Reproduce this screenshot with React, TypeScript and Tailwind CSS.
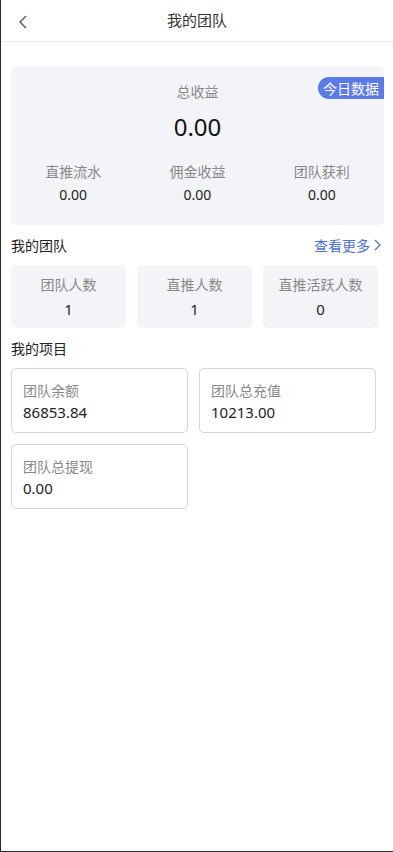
import React from 'react';

const font = { fontFamily: '"Noto Sans", "Noto Sans CJK SC", sans-serif' };

const teamStats = [
  { label: '团队人数', value: '1' },
  { label: '直推人数', value: '1' },
  { label: '直推活跃人数', value: '0' },
];

const projects = [
  { label: '团队余额', value: '86853.84' },
  { label: '团队总充值', value: '10213.00' },
  { label: '团队总提现', value: '0.00' },
];

const earnings = [
  { label: '直推流水', value: '0.00' },
  { label: '佣金收益', value: '0.00' },
  { label: '团队获利', value: '0.00' },
];

export default function App() {
  return (
    <div style={font} className="h-[852px] w-[393px] bg-white border-l border-b border-[#2a2a2a] text-[#222] overflow-hidden">
      {/* header */}
      <div className="relative h-[42px] flex items-center justify-center border-b border-[#e6e6e6]">
        <svg className="absolute left-[16px] top-[14px]" width="12" height="16" viewBox="0 0 12 16" fill="none">
          <polyline points="9,2 3,8 9,14" stroke="#555" strokeWidth="1.4" />
        </svg>
        <span className="text-[15px] text-[#333]">我的团队</span>
      </div>

      <div className="pl-[10px] pr-[9px] pt-[24px]">
        {/* summary card */}
        <div className="relative bg-[#f3f4f8] rounded-[5px] pt-[16px] pb-[20px]">
          <span className="absolute right-0 top-[11px] h-[22px] px-[5px] flex items-center bg-[#5a7be8] text-white text-[14px] rounded-l-full">今日数据</span>
          <div className="text-center text-[14px] leading-[20px] text-[#888]">总收益</div>
          <div className="text-center text-[24px] leading-[32px] mt-[9px] text-[#111]">0.00</div>
          <div className="grid grid-cols-3 mt-[19px]">
            {earnings.map(e => (
              <div key={e.label} className="text-center">
                <div className="text-[14px] leading-[20px] text-[#888]">{e.label}</div>
                <div className="text-[14px] leading-[20px] mt-[3px] text-[#222]">{e.value}</div>
              </div>
            ))}
          </div>
        </div>

        {/* my team */}
        <div className="flex items-center justify-between mt-[10px] h-[20px]">
          <span className="text-[14px] text-[#222]">我的团队</span>
          <span className="flex items-center text-[14px] text-[#4a6fd4] mr-[3px]">
            查看更多
            <svg className="ml-[3px]" width="8" height="12" viewBox="0 0 8 12" fill="none">
              <polyline points="2,1 7,6 2,11" stroke="#4a6fd4" strokeWidth="1.2" />
            </svg>
          </span>
        </div>
        <div className="flex gap-[11px] mt-[10px]">
          {teamStats.map(s => (
            <div key={s.label} className="w-[115px] h-[63px] bg-[#f3f4f8] rounded-[5px] pt-[10px] text-center">
              <div className="text-[14px] leading-[20px] text-[#888]">{s.label}</div>
              <div className="text-[15px] leading-[20px] mt-[4px] text-[#222]">{s.value}</div>
            </div>
          ))}
        </div>

        {/* my projects */}
        <div className="text-[14px] leading-[20px] mt-[11px]">我的项目</div>
        <div className="grid grid-cols-[177px_177px] gap-[11px] mt-[9px]">
          {projects.map(p => (
            <div key={p.label} className="h-[65px] border border-[#d6d6d6] rounded-[5px] pl-[11px] pt-[12px]">
              <div className="text-[14px] leading-[20px] text-[#888]">{p.label}</div>
              <div className="text-[15px] leading-[20px] mt-[1px] text-[#222]">{p.value}</div>
            </div>
          ))}
        </div>
      </div>
    </div>
  );
}
